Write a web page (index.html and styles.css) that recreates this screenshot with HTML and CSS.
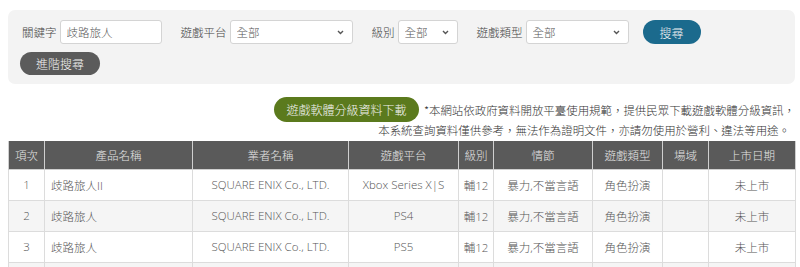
FILE: index.html
```html
<!DOCTYPE html>
<html lang="zh-Hant">
<head>
<meta charset="utf-8">
<link rel="stylesheet" href="styles.css">
</head>
<body>
<div class="page">
  <form class="search-panel">
    <div class="search-row">
      <label class="field">
        <span class="field-label">關鍵字</span>
        <input class="text-input" type="text" value="歧路旅人">
      </label>
      <label class="field">
        <span class="field-label">遊戲平台</span>
        <select class="select select-platform"><option>全部</option></select>
      </label>
      <label class="field">
        <span class="field-label">級別</span>
        <select class="select select-level"><option>全部</option></select>
      </label>
      <label class="field">
        <span class="field-label">遊戲類型</span>
        <select class="select select-type"><option>全部</option></select>
      </label>
      <button type="button" class="btn btn-search">搜尋</button>
    </div>
    <div class="search-row">
      <button type="button" class="btn btn-advanced">進階搜尋</button>
    </div>
  </form>

  <div class="notice">
    <div class="notice-line">
      <button type="button" class="btn btn-download">遊戲軟體分級資料下載</button>
      <span class="notice-text">*本網站依政府資料開放平臺使用規範，提供民眾下載遊戲軟體分級資訊，</span>
    </div>
    <div class="notice-line notice-line2">本系統查詢資料僅供參考，無法作為證明文件，亦請勿使用於營利、違法等用途。</div>
  </div>

  <table class="result">
    <colgroup>
      <col class="c-no"><col class="c-name"><col class="c-company"><col class="c-platform"><col class="c-level"><col class="c-plot"><col class="c-genre"><col class="c-venue"><col class="c-date">
    </colgroup>
    <thead>
      <tr><th>項次</th><th>產品名稱</th><th>業者名稱</th><th>遊戲平台</th><th>級別</th><th>情節</th><th>遊戲類型</th><th>場域</th><th>上市日期</th></tr>
    </thead>
    <tbody>
      <tr><td>1</td><td class="left">歧路旅人II</td><td>SQUARE ENIX Co., LTD.</td><td>Xbox Series X|S</td><td>輔12</td><td>暴力,不當言語</td><td>角色扮演</td><td></td><td>未上市</td></tr>
      <tr><td>2</td><td class="left">歧路旅人</td><td>SQUARE ENIX Co., LTD.</td><td>PS4</td><td>輔12</td><td>暴力,不當言語</td><td>角色扮演</td><td></td><td>未上市</td></tr>
      <tr><td>3</td><td class="left">歧路旅人</td><td>SQUARE ENIX Co., LTD.</td><td>PS5</td><td>輔12</td><td>暴力,不當言語</td><td>角色扮演</td><td></td><td>未上市</td></tr>
      <tr class="filler"><td></td><td></td><td></td><td></td><td></td><td></td><td></td><td></td><td></td></tr>
    </tbody>
  </table>
</div>
</body>
</html>
```

FILE: styles.css
```css
* { box-sizing: border-box; }
html, body { margin: 0; padding: 0; background: #fff; }
body {
  font-family: "Open Sans", "Noto Sans CJK TC", sans-serif;
  font-size: 11.5px;
  font-weight: 300;
  color: #444;
  overflow: hidden;
}
.page { padding: 10px 5px 0 8px; }

.search-panel {
  background: #f3f3f3;
  border-radius: 7px;
  padding: 10px 12px 9px 12px;
  display: flex;
  flex-direction: column;
  gap: 8px;
}
.search-row { display: flex; align-items: center; }
.field { display: flex; align-items: center; margin-left: 2px; margin-right: 17px; }
.field-label { margin-right: 3px; color: #444; font-family: "Noto Sans CJK TC", sans-serif; }
.text-input, .select {
  height: 24px;
  border: 1px solid #d4d4d4;
  border-radius: 3px;
  background-color: #fff;
  font: inherit;
  font-family: "Noto Sans CJK TC", sans-serif;
  color: #555;
  padding: 0 6px;
}
.text-input { width: 102px; }
.select {
  -webkit-appearance: none;
  appearance: none;
  background-image: url("data:image/svg+xml;utf8,<svg xmlns='http://www.w3.org/2000/svg' width='7' height='5' viewBox='0 0 7 5'><path d='M1 1 L3.5 3.5 L6 1' fill='none' stroke='%23555' stroke-width='1.4'/></svg>");
  background-repeat: no-repeat;
  background-position: right 8px center;
}
.select-platform { width: 123px; }
.select-level { width: 60px; }
.select-type { width: 103px; }

.btn {
  border: none;
  border-radius: 999px;
  font: inherit;
  font-family: "Noto Sans CJK TC", sans-serif;
  color: #f2f2f2;
  cursor: pointer;
  padding: 0;
}
.btn-search { background: #1b6a8d; width: 58px; height: 24px; margin-left: -3px; font-size: 12px; }
.btn-advanced { background: #5b5b5b; width: 80px; height: 23px; font-size: 12px; }
.btn-download { background: #5b7a1d; width: 145px; height: 25px; font-size: 12px; margin-right: 9px; }

.notice {
  margin-top: 13px;
  display: flex;
  flex-direction: column;
  align-items: flex-end;
  font-family: "Noto Sans CJK TC", sans-serif;
  font-size: 11.45px;
  color: #333;
}
.notice-line { display: flex; align-items: center; height: 25px; }
.notice-text { margin-left: -4px; }
.notice-line2 { height: 20px; margin-right: 5px; margin-top: -2px; }

.result {
  margin-top: 1px;
  width: 787px;
  border-collapse: collapse;
  table-layout: fixed;
  font-size: 11.5px;
}
.c-no { width: 36px; }
.c-name { width: 148px; }
.c-company { width: 156px; }
.c-platform { width: 110px; }
.c-level { width: 35px; }
.c-plot { width: 99px; }
.c-genre { width: 70px; }
.c-venue { width: 46px; }
.c-date { width: 87px; }

.result th {
  background: #5a5a5a;
  color: #e4e4e4;
  font-weight: 300;
  height: 28px;
  border: 1px solid #cfcfcf;
  border-top: none;
  font-family: "Noto Sans CJK TC", sans-serif;
  padding: 0;
}
.result td {
  height: 31px;
  border: 1px solid #dcdcdc;
  text-align: center;
  color: #555;
  padding: 0 4px;
  white-space: nowrap;
}
.result td.left { text-align: left; padding-left: 6px; }
.result tbody tr:nth-child(even) td { background: #f5f5f5; }
```
